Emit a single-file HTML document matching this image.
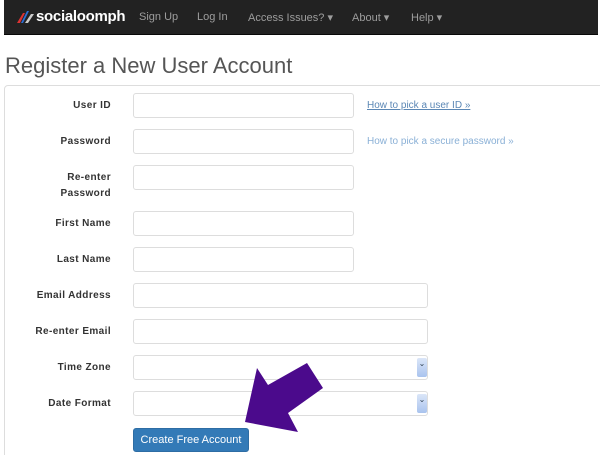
<!DOCTYPE html>
<html><head><style>
*{box-sizing:border-box;margin:0;padding:0}
html,body{width:600px;height:455px;overflow:hidden}
body{background:#fff;font-family:"Liberation Sans",sans-serif;position:relative}
.nav{position:absolute;left:4px;top:0;width:594px;height:35px;background:#222;border-bottom:1px solid #080808}
.nav span{position:absolute;top:11px;font-size:11px;color:#9d9d9d}
.logo{position:absolute;left:32px;top:8px;font-size:15px;font-weight:bold;color:#fff;letter-spacing:-0.3px}
h1{position:absolute;left:5px;top:53px;font-size:22px;font-weight:normal;color:#555}
.panel{position:absolute;left:4px;top:85px;width:620px;height:380px;border:1px solid #ddd;border-radius:4px}
.lab{position:absolute;right:489px;font-size:10px;font-weight:bold;color:#333;letter-spacing:0.4px;text-align:right;line-height:16px}
.in{position:absolute;left:133px;height:25px;border:1px solid #ddd;border-radius:3px;background:#fff}
.sel::after{content:"⌄";font-size:8px;color:#345;text-align:center;line-height:12px;position:absolute;right:0;top:2px;width:10px;height:19px;background:linear-gradient(#dbe6f8,#a9c3ee);border-radius:2px}
.lnk{position:absolute;left:367px;font-size:10px;color:#8ab0d6}
.btn{position:absolute;left:133px;top:428px;width:116px;height:24px;background:#337ab7;border:1px solid #2e6da4;border-radius:3px;color:#fff;font-size:11px;text-align:center;line-height:22px}
</style></head><body>
<div class="nav">
<svg style="position:absolute;left:13px;top:10px" width="18" height="14"><path d="M4 13L10 1L12 1L6 13Z" fill="#2c6fd4"/><path d="M0 13L6 3L8 3L3 13Z" fill="#d33"/><path d="M8 13L14 4L17 4L11 13Z" fill="#ccc"/></svg>
<div class="logo">socialoomph</div>
<span style="left:135px">Sign Up</span>
<span style="left:193px">Log In</span>
<span style="left:244px">Access Issues? ▾</span>
<span style="left:348px">About ▾</span>
<span style="left:407px">Help ▾</span>
</div>
<h1>Register a New User Account</h1>
<div class="panel"></div>
<div class="lab" style="top:98px">User ID</div>
<div class="lab" style="top:134px">Password</div>
<div class="lab" style="top:170px">Re-enter<br>Password</div>
<div class="lab" style="top:216px">First Name</div>
<div class="lab" style="top:252px">Last Name</div>
<div class="lab" style="top:288px">Email Address</div>
<div class="lab" style="top:324px">Re-enter Email</div>
<div class="lab" style="top:360px">Time Zone</div>
<div class="lab" style="top:396px">Date Format</div>
<div class="in" style="top:93px;width:221px"></div>
<div class="in" style="top:129px;width:221px"></div>
<div class="in" style="top:165px;width:221px"></div>
<div class="in" style="top:211px;width:221px"></div>
<div class="in" style="top:247px;width:221px"></div>
<div class="in" style="top:283px;width:295px"></div>
<div class="in" style="top:319px;width:295px"></div>
<div class="in sel" style="top:355px;width:295px"></div>
<div class="in sel" style="top:391px;width:295px"></div>
<div class="lnk" style="top:100px;color:#5b87b5;text-decoration:underline">How to pick a user ID »</div>
<div class="lnk" style="top:136px">How to pick a secure password »</div>
<div class="btn">Create Free Account</div>
<svg style="position:absolute;left:0;top:0" width="600" height="455"><polygon points="245,422 257,368 268,385 307,363 323,388 288,413 298,432" fill="#4b0a8c"/></svg>
</body></html>
